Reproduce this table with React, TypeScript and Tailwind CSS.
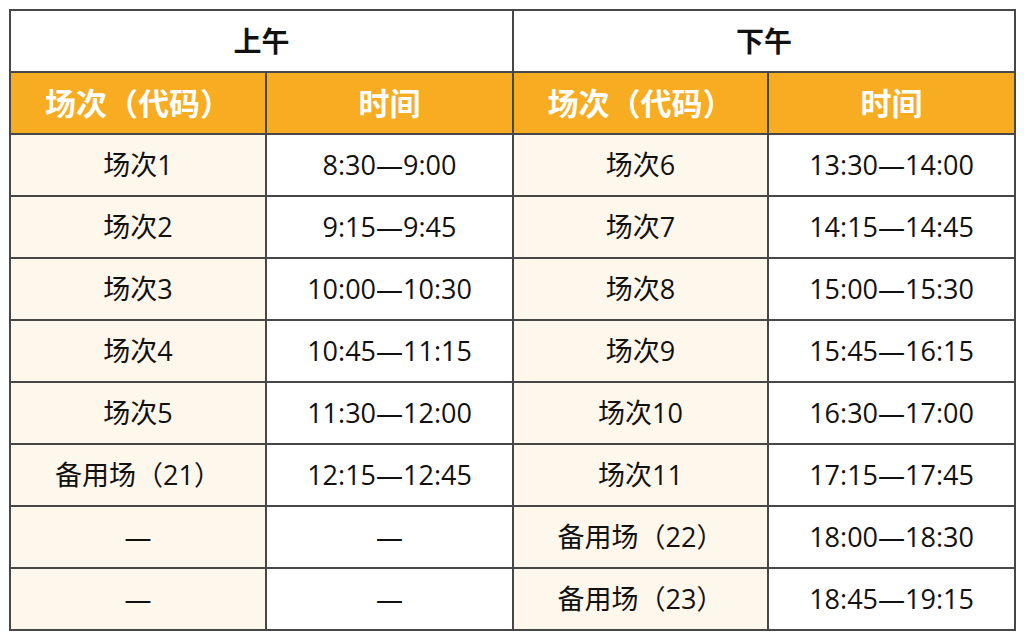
const rows: [string, string, string, string][] = [
  ["场次1", "8:30—9:00", "场次6", "13:30—14:00"],
  ["场次2", "9:15—9:45", "场次7", "14:15—14:45"],
  ["场次3", "10:00—10:30", "场次8", "15:00—15:30"],
  ["场次4", "10:45—11:15", "场次9", "15:45—16:15"],
  ["场次5", "11:30—12:00", "场次10", "16:30—17:00"],
  ["备用场（21）", "12:15—12:45", "场次11", "17:15—17:45"],
  ["—", "—", "备用场（22）", "18:00—18:30"],
  ["—", "—", "备用场（23）", "18:45—19:15"],
];

const cell = "border-2 border-[#474747] text-center align-middle p-0";

export default function App() {
  return (
    <div
      className="w-[1024px] h-[640px] bg-white pl-[9px] pt-[9px]"
      style={{ fontFamily: '"Open Sans", "Noto Sans CJK SC", sans-serif' }}
    >
      <table className="border-collapse table-fixed w-[1005px] text-[#111]">
        <colgroup>
          <col className="w-[256px]" />
          <col className="w-[247px]" />
          <col className="w-[255px]" />
          <col className="w-[247px]" />
        </colgroup>
        <thead>
          <tr className="h-[62px]">
            <th colSpan={2} className={`${cell} text-[28px] font-bold bg-white`}>
              上午
            </th>
            <th colSpan={2} className={`${cell} text-[28px] font-bold bg-white`}>
              下午
            </th>
          </tr>
          <tr className="h-[62px] bg-[#f8ac21] text-white">
            <th className={`${cell} text-[31px] font-bold`}>场次（代码）</th>
            <th className={`${cell} text-[31px] font-bold`}>时间</th>
            <th className={`${cell} text-[31px] font-bold`}>场次（代码）</th>
            <th className={`${cell} text-[31px] font-bold`}>时间</th>
          </tr>
        </thead>
        <tbody>
          {rows.map((r, i) => (
            <tr key={i} className="h-[62px] text-[27px]">
              <td className={`${cell} bg-[#fef7ec]`}>{r[0]}</td>
              <td className={`${cell} bg-white`}>{r[1]}</td>
              <td className={`${cell} bg-[#fef7ec]`}>{r[2]}</td>
              <td className={`${cell} bg-white`}>{r[3]}</td>
            </tr>
          ))}
        </tbody>
      </table>
    </div>
  );
}
